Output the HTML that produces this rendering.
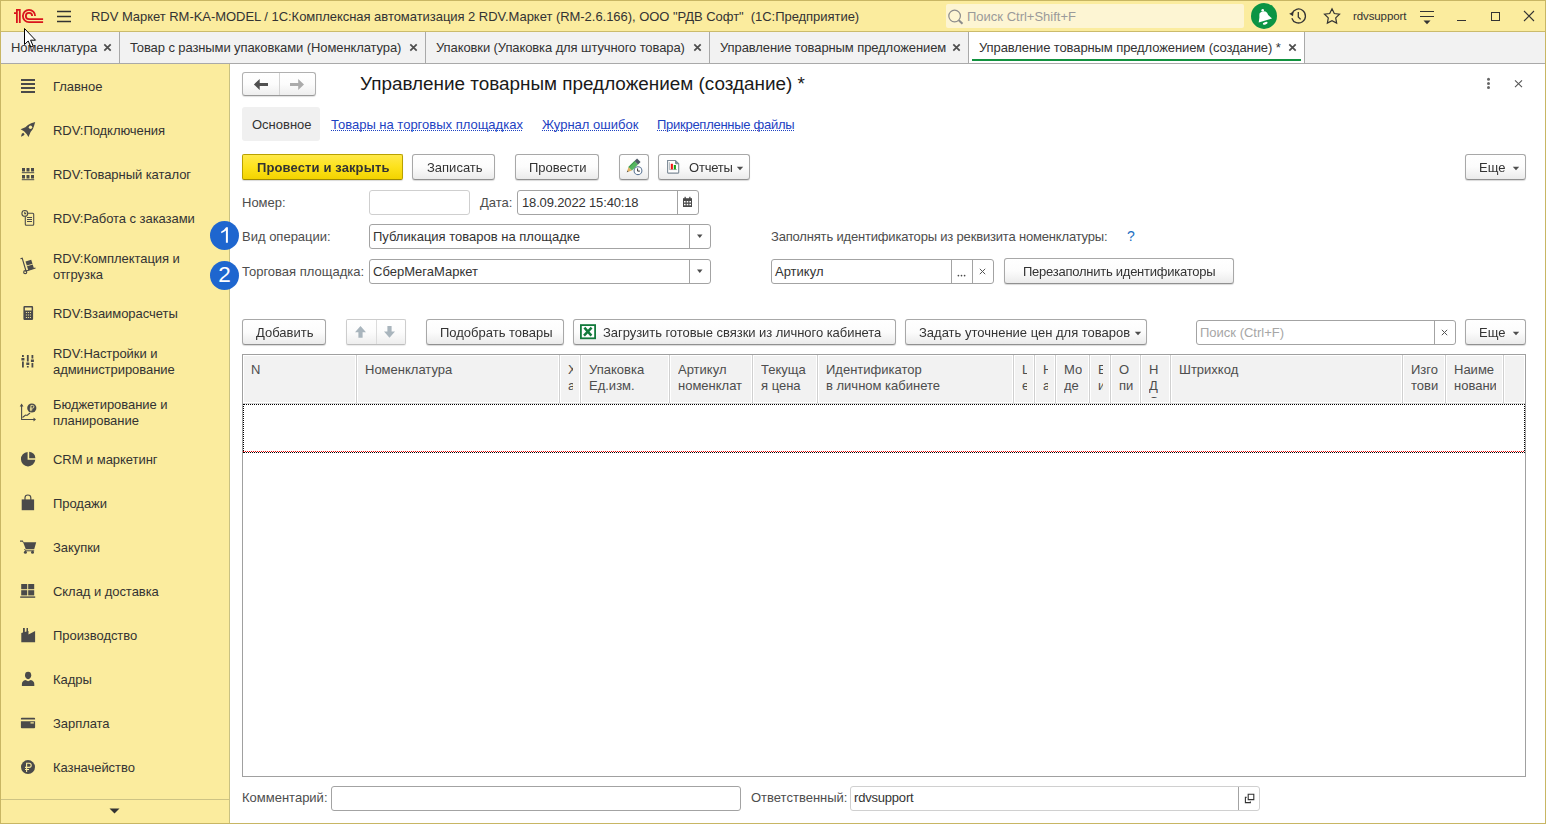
<!DOCTYPE html>
<html><head><meta charset="utf-8">
<style>
*{box-sizing:border-box;margin:0;padding:0}
html,body{width:1546px;height:824px;overflow:hidden;background:#fff;font-family:"Liberation Sans",sans-serif;font-size:13px;color:#333}
.a{position:absolute}
.t{position:absolute;font-size:13px;line-height:15px;white-space:nowrap}
.sep{position:absolute;top:32px;width:2px;height:31px;background:#a9a9a9}
.si{position:absolute;left:53px;font-size:13px;line-height:16px;color:#333;white-space:nowrap;letter-spacing:-0.05px}
.ic{position:absolute}
.btn{position:absolute;height:26px;border:1px solid #a8a8a8;border-bottom-color:#909090;border-radius:3px;background:linear-gradient(#ffffff 0%,#fcfcfc 50%,#ebebeb 100%);box-shadow:0 1px 1px rgba(0,0,0,.15)}
.inp{position:absolute;height:25px;border:1px solid #a3a3a3;border-radius:3px;background:#fff}
.lbl{color:#4d4d4d}
.hs{position:absolute;top:355px;width:2px;height:48px;border-left:1px solid #d0d0d0;border-right:1px solid #fbfbfb}
.hd{position:absolute;top:362px;font-size:13px;line-height:16px;color:#4d4d4d;white-space:nowrap;overflow:hidden}
.x7{position:absolute;width:8px;height:8px}
</style></head><body>
<!-- TITLE BAR -->
<div class="a" style="left:0;top:0;width:1546px;height:31px;background:#fbec9e"></div>
<div class="a" style="left:0;top:31px;width:1546px;height:1px;background:#cbbb6c"></div>
<!-- 1C logo -->
<svg class="a" style="left:0;top:0" width="50" height="31" viewBox="0 0 50 31">
 <g fill="#d9141c"><path d="M16 9 H20.7 V23 H18.9 V10.8 H17.8 V23 H16 V12.2 H14 V14 H16Z"/></g>
 <g fill="none" stroke="#d9141c" stroke-width="1.8">
  <path d="M43.1 22.1 H29 A6.1 6.1 0 1 1 35.1 16"/>
  <path d="M43.1 19.15 H29 A3.15 3.15 0 1 1 32.15 16"/>
 </g>
</svg>
<!-- hamburger -->
<svg class="a" style="left:55px;top:8px" width="18" height="16" viewBox="55 8 18 16"><g stroke="#333" stroke-width="1.5"><path d="M57 11.6 H71 M57 16.6 H71 M57 21.6 H71"/></g></svg>
<div class="t" style="left:91px;top:9px;color:#333;letter-spacing:-0.04px">RDV Маркет RM-KA-MODEL / 1С:Комплексная автоматизация 2 RDV.Маркет (RM-2.6.166), ООО "РДВ Софт"&nbsp; (1С:Предприятие)</div>
<!-- search -->
<div class="a" style="left:946px;top:4px;width:298px;height:24px;background:#fdf5d3;border-radius:2px"></div>
<svg class="a" style="left:946px;top:7px" width="20" height="20" viewBox="0 0 20 20"><circle cx="8.6" cy="9" r="5.8" fill="none" stroke="#8c8c8c" stroke-width="1.2"/><path d="M12.8 13.2 L16.5 16.8" stroke="#8c8c8c" stroke-width="2"/></svg>
<div class="t" style="left:967px;top:9px;color:#9a9a9a">Поиск Ctrl+Shift+F</div>
<!-- bell -->
<svg class="a" style="left:1250px;top:2px" width="28" height="28" viewBox="1250 2 28 28">
 <circle cx="1264" cy="15.9" r="13" fill="#0b9444"/>
 <circle cx="1262.7" cy="10.3" r="1.3" fill="#fff"/>
 <path d="M1259.6 13.2 Q1262.2 10.4 1265.5 11.6 Q1267.4 12.6 1268.2 15 L1272 18.4 L1258.7 22.4 L1259.4 17.4 Q1259.2 14.8 1259.6 13.2Z" fill="#fff"/>
 <ellipse cx="1265.2" cy="23.3" rx="2.5" ry="1.2" transform="rotate(-17 1265.2 23.3)" fill="#fff"/>
</svg>
<!-- history -->
<svg class="a" style="left:1288px;top:6px" width="20" height="20" viewBox="0 0 20 20">
 <path d="M3.9 7.5 A7 7 0 1 1 3.8 12.2" fill="none" stroke="#333" stroke-width="1.3"/>
 <path d="M1.2 7.8 L5.6 5.8 L5 10.2 Z" fill="#333"/>
 <path d="M10.3 6 V11 L12.6 13.4" fill="none" stroke="#333" stroke-width="1.3"/>
</svg>
<!-- star -->
<svg class="a" style="left:1320px;top:4px" width="24" height="24" viewBox="1320 4 24 24"><path d="M1332.00 8.80 L1334.29 13.54 L1339.51 14.26 L1335.71 17.91 L1336.64 23.09 L1332.00 20.60 L1327.36 23.09 L1328.29 17.91 L1324.49 14.26 L1329.71 13.54Z" fill="none" stroke="#333" stroke-width="1.2" stroke-linejoin="miter"/></svg>
<div class="t" style="left:1353px;top:9px;font-size:11.5px;color:#333;letter-spacing:-0.1px">rdvsupport</div>
<!-- filter icon -->
<div class="a" style="left:1420px;top:11px;width:14px;height:1.2px;background:#333"></div>
<div class="a" style="left:1420px;top:16px;width:14px;height:1.2px;background:#333"></div>
<svg class="a" style="left:1423px;top:20px" width="8" height="5" viewBox="0 0 8 5"><path d="M0.5 0.5 H7.5 L4 4.3Z" fill="#333"/></svg>
<!-- min / max / close -->
<div class="a" style="left:1457px;top:20px;width:9px;height:1.2px;background:#333"></div>
<div class="a" style="left:1491px;top:12px;width:9px;height:9px;border:1.2px solid #333"></div>
<svg class="a" style="left:1523px;top:10px" width="12" height="12" viewBox="0 0 12 12"><path d="M1 1 L11 11 M11 1 L1 11" stroke="#333" stroke-width="1.1"/></svg>

<!-- TABS -->
<div class="a" style="left:0;top:32px;width:1546px;height:31px;background:#f2f2f2"></div>
<div class="a" style="left:0;top:63px;width:1546px;height:1px;background:#a9a9a9"></div>
<div class="a" style="left:969px;top:32px;width:335px;height:31px;background:#fff"></div>
<div class="a" style="left:972px;top:59px;width:329px;height:2px;background:#12923f"></div>
<div class="sep" style="left:119px;width:1px"></div>
<div class="sep" style="left:425px;width:1px"></div>
<div class="sep" style="left:709px;width:1px"></div>
<div class="sep" style="left:968px;width:1px"></div>
<div class="sep" style="left:1304px;width:1px"></div>
<div class="t" style="left:11px;top:40px;color:#333;letter-spacing:-0.1px">Номенклатура</div>
<div class="t" style="left:130px;top:40px;color:#333;letter-spacing:-0.1px">Товар с разными упаковками (Номенклатура)</div>
<div class="t" style="left:436px;top:40px;color:#333;letter-spacing:-0.1px">Упаковки (Упаковка для штучного товара)</div>
<div class="t" style="left:720px;top:40px;color:#333;letter-spacing:-0.1px">Управление товарным предложением</div>
<div class="t" style="left:979px;top:40px;color:#333;letter-spacing:-0.1px">Управление товарным предложением (создание) *</div>
<!-- tab close x -->
<svg class="a" style="left:0;top:0" width="1546" height="64" viewBox="0 0 1546 64"><g stroke="#4d4d4d" stroke-width="1.7" fill="none">
 <path d="M104.3 44.3 L110.7 50.7 M110.7 44.3 L104.3 50.7"/>
 <path d="M410.3 44.3 L416.7 50.7 M416.7 44.3 L410.3 50.7"/>
 <path d="M694.3 44.3 L700.7 50.7 M700.7 44.3 L694.3 50.7"/>
 <path d="M953.3 44.3 L959.7 50.7 M959.7 44.3 L953.3 50.7"/>
 <path d="M1289.3 44.3 L1295.7 50.7 M1295.7 44.3 L1289.3 50.7"/>
</g></svg>

<!-- SIDEBAR -->
<div class="a" style="left:0;top:64px;width:229px;height:760px;background:#fbec9e"></div>
<div class="a" style="left:229px;top:64px;width:1px;height:760px;background:#c9c182"></div>
<div class="a" style="left:0;top:799px;width:229px;height:1px;background:#cdc384"></div>
<svg class="a" style="left:109px;top:808px" width="11" height="6" viewBox="0 0 11 6"><path d="M0.5 0.5 H10.5 L5.5 5.5Z" fill="#333"/></svg>
<div class="si" style="top:79px">Главное</div>
<div class="si" style="top:123px">RDV:Подключения</div>
<div class="si" style="top:167px">RDV:Товарный каталог</div>
<div class="si" style="top:211px">RDV:Работа с заказами</div>
<div class="si" style="top:251px">RDV:Комплектация и<br>отгрузка</div>
<div class="si" style="top:306px">RDV:Взаиморасчеты</div>
<div class="si" style="top:346px">RDV:Настройки и<br>администрирование</div>
<div class="si" style="top:397px">Бюджетирование и<br>планирование</div>
<div class="si" style="top:452px">CRM и маркетинг</div>
<div class="si" style="top:496px">Продажи</div>
<div class="si" style="top:540px">Закупки</div>
<div class="si" style="top:584px">Склад и доставка</div>
<div class="si" style="top:628px">Производство</div>
<div class="si" style="top:672px">Кадры</div>
<div class="si" style="top:716px">Зарплата</div>
<div class="si" style="top:760px">Казначейство</div>
<svg class="a" style="left:0;top:64px" width="229" height="736" viewBox="0 64 229 736"><g fill="#4a4a4a">
 <!-- Главное -->
 <rect x="21" y="79" width="14" height="2"/><rect x="21" y="83" width="14" height="2"/><rect x="21" y="87" width="14" height="2"/><rect x="21" y="91" width="14" height="2"/>
 <!-- rocket -->
 <path d="M35.2 122 L31.2 123.2 Q27.6 124.6 25.4 127.2 L20.6 129.3 L24 131.2 L26.6 134 L28.5 136.9 L30.6 132 Q33.4 129.4 34.1 125.8 Z"/>
 <circle cx="30.5" cy="127.3" r="1.7" fill="#fbec9e"/>
 <path d="M21 136.8 L21.8 133.8 L23.2 132.8 L24.6 134.2 L23.6 135.6 Z"/>
 <!-- catalog -->
 <rect x="22" y="168" width="3" height="3.5"/><rect x="26.5" y="168" width="3" height="3.5"/><rect x="31" y="168" width="3" height="3.5"/>
 <rect x="21.8" y="172.2" width="12.4" height="1"/>
 <rect x="22" y="175" width="3" height="3.5"/><rect x="26.5" y="175" width="3" height="3.5"/><rect x="31" y="175" width="3" height="3.5"/>
 <rect x="21.8" y="179.2" width="12.4" height="1"/>
 <!-- orders -->
 <g fill="none" stroke="#4a4a4a" stroke-width="1.1"><rect x="25.3" y="213.3" width="8.4" height="12" rx="1"/><circle cx="24.8" cy="213.4" r="2.9" fill="#fbec9e"/><path d="M24.8 211.8 V213.6 H26.2"/><path d="M27 217.5 H32 M27 219.5 H32 M27 221.5 H32" stroke-width="1"/></g>
 <!-- hand truck -->
 <g fill="none" stroke="#4a4a4a" stroke-width="1.2"><path d="M20.5 258.8 L22.2 258.2 L26 271 L35.5 268"/><circle cx="25.2" cy="272.2" r="1.5"/></g>
 <path d="M25.5 261.5 L31.2 259.7 L32.5 263.8 L26.8 265.6Z M27 266.3 L32.7 264.5 L34 268.6 L28.3 270.4Z"/>
 <!-- calculator -->
 <path d="M24.5 306 H32 Q33.1 306 33.1 307.2 V318.8 Q33.1 320 32 320 H24.5 Q23.4 320 23.4 318.8 V307.2 Q23.4 306 24.5 306Z M24.9 307.5 V310.5 H31.6 V307.5Z" fill-rule="evenodd"/>
 <g fill="#fbec9e"><rect x="25.9" y="312" width="1" height="1"/><rect x="27.9" y="312" width="1" height="1"/><rect x="29.9" y="312" width="1" height="1"/><rect x="25.9" y="314.5" width="1" height="1"/><rect x="27.9" y="314.5" width="1" height="1"/><rect x="29.9" y="314.5" width="1" height="1"/><rect x="25.9" y="317" width="1" height="1"/><rect x="27.9" y="317" width="1" height="1"/><rect x="29.9" y="317" width="1" height="1"/></g>
 <!-- sliders -->
 <rect x="22" y="355" width="1.8" height="2"/><rect x="21.4" y="358" width="3" height="2.5"/><rect x="22" y="361.5" width="1.8" height="6"/>
 <rect x="26.9" y="355" width="1.8" height="6.5"/><rect x="26.3" y="362.5" width="3" height="2.5"/><rect x="26.9" y="366" width="1.8" height="1.5"/>
 <rect x="31.5" y="355" width="1.8" height="3.5"/><rect x="30.9" y="359.5" width="3" height="2.5"/><rect x="31.5" y="363" width="1.8" height="4.5"/>
 <!-- budget -->
 <g fill="none" stroke="#4a4a4a" stroke-width="1.1"><path d="M21.6 405 V419.5 H35"/><path d="M22.5 417.5 L25.5 415 L27 415.5 L30 413"/></g>
 <path d="M19.7 406.5 L21.6 403.5 L23.5 406.5Z M33.5 417.6 L36 419.5 L33.5 421.4Z"/>
 <circle cx="31.8" cy="408" r="4.6"/>
 <g fill="none" stroke="#fbec9e" stroke-width="0.9"><path d="M30.9 411.2 V405.4 H32.5 Q33.9 405.4 33.9 406.8 Q33.9 408.2 32.5 408.2 H29.8 M29.8 409.8 H32.4"/></g>
 <!-- CRM pie -->
 <path d="M27.6 452 A7.2 7.2 0 1 0 35.3 459.8 H27.6Z"/>
 <path d="M29.2 451.8 A7 7 0 0 1 35.4 458.2 H29.2Z"/>
 <!-- bag -->
 <rect x="21.7" y="499.4" width="12.4" height="10.8"/>
 <path d="M25 500 V497.8 Q25 495 27.9 495 Q30.8 495 30.8 497.8 V500" fill="none" stroke="#4a4a4a" stroke-width="1.2"/>
 <!-- cart -->
 <path d="M20 540.5 H22.8 L23.6 542.3 H36.2 L34.2 549.3 H25.8 L23.3 542.8 L22.2 541.7 H20Z"/>
 <circle cx="25.4" cy="552.2" r="1.5"/><circle cx="32.5" cy="552.2" r="1.5"/>
 <path d="M24.6 549 L25.5 550.8 H34.2" fill="none" stroke="#4a4a4a" stroke-width="1"/>
 <!-- sklad -->
 <rect x="21.2" y="584" width="6" height="5.2"/><rect x="28.2" y="584" width="6" height="5.2"/>
 <rect x="21.2" y="590.2" width="6" height="5.2"/><rect x="28.2" y="590.2" width="6" height="5.2"/>
 <rect x="20.2" y="596.4" width="15" height="1.4"/>
 <!-- factory -->
 <path d="M21.3 642.2 V633 L23 632.5 V628 H24.8 V632 L26.5 631.5 V628 H28 V631 L28.5 630.9 V634.5 L35.1 631 V642.2Z"/>
 <!-- person -->
 <path d="M28.1 671.8 Q31.2 671.8 31.2 675.2 Q31.2 678.3 28.1 679.3 Q25 678.3 25 675.2 Q25 671.8 28.1 671.8Z"/>
 <path d="M21.9 686 V684 Q22 680.8 25.5 680 L28.1 681.3 L30.7 680 Q34.2 680.8 34.3 684 V686Z"/>
 <!-- card -->
 <path d="M21.8 717.8 H34.2 Q35.1 717.8 35.1 718.8 V719.5 H20.9 V718.8 Q20.9 717.8 21.8 717.8Z"/>
 <path d="M20.9 721.2 H35.1 V727.3 Q35.1 728.3 34.2 728.3 H21.8 Q20.9 728.3 20.9 727.3Z M30.5 722.3 V723.4 H33.8 V722.3Z" fill-rule="evenodd"/>
 <!-- ruble -->
 <circle cx="28" cy="767.1" r="7"/>
 <g fill="none" stroke="#fbec9e" stroke-width="1.1"><path d="M26.6 772 V763.2 H29.1 Q31.2 763.2 31.2 765.3 Q31.2 767.4 29.1 767.4 H25 M25 769.5 H29"/></g>
</g></svg>

<!-- CONTENT HEADER -->
<div class="a" style="left:242px;top:72px;width:74px;height:24px;border:1px solid #b0b0b0;border-bottom-color:#999;border-radius:3px;background:linear-gradient(#fff 0%,#fcfcfc 50%,#eeeeee 100%);box-shadow:0 1px 1px rgba(0,0,0,.12)"></div>
<div class="a" style="left:279px;top:73px;width:1px;height:22px;background:#d4d4d4"></div>
<svg class="a" style="left:250px;top:76px" width="20" height="16" viewBox="250 76 20 16"><path d="M253.9 84.4 L259.7 78.9 V83.1 H268 V85.9 H259.7 V89.9Z" fill="#505050"/></svg>
<svg class="a" style="left:288px;top:76px" width="20" height="16" viewBox="288 76 20 16"><path d="M304 84.4 L298.2 78.9 V83.1 H290 V85.9 H298.2 V89.9Z" fill="#ababab"/></svg>
<div class="t" style="left:360px;top:74px;font-size:18.9px;line-height:20px;color:#1a1a1a">Управление товарным предложением (создание) *</div>
<svg class="a" style="left:1484px;top:76px" width="9" height="15" viewBox="0 0 9 15"><g fill="#666"><circle cx="4.5" cy="3.3" r="1.5"/><circle cx="4.5" cy="7.4" r="1.5"/><circle cx="4.5" cy="11.4" r="1.5"/></g></svg>
<svg class="a" style="left:1512px;top:77px" width="13" height="13" viewBox="0 0 13 13"><path d="M3 3.4 L10 10.2 M10 3.4 L3 10.2" stroke="#555" stroke-width="1.1"/></svg>

<!-- form tabs -->
<div class="a" style="left:242px;top:107px;width:78px;height:34px;background:#f0f0f0;border-radius:3px"></div>
<div class="t" style="left:252px;top:117px;color:#333">Основное</div>
<div class="t" style="left:331px;top:117px;color:#1d42c2">Товары на торговых площадках</div>
<div class="t" style="left:542px;top:117px;color:#1d42c2">Журнал ошибок</div>
<div class="t" style="left:657px;top:117px;color:#1d42c2;letter-spacing:-0.27px">Прикрепленные файлы</div>
<div class="a" style="left:331px;top:130px;width:191px;height:1px;background:repeating-linear-gradient(90deg,#1d42c2 0 1px,transparent 1px 2px)"></div>
<div class="a" style="left:542px;top:130px;width:95px;height:1px;background:repeating-linear-gradient(90deg,#1d42c2 0 1px,transparent 1px 2px)"></div>
<div class="a" style="left:657px;top:130px;width:137px;height:1px;background:repeating-linear-gradient(90deg,#1d42c2 0 1px,transparent 1px 2px)"></div>

<!-- command bar -->
<div class="a" style="left:242px;top:154px;width:161px;height:26px;border:1px solid #b9a100;border-bottom-color:#a08a00;border-radius:2px;background:linear-gradient(#ffe94a 0%,#fde21c 50%,#f3d300 100%);box-shadow:0 1px 1px rgba(0,0,0,.15)"></div>
<div class="t" style="will-change:transform;left:257px;top:160px;font-weight:bold;color:#333;letter-spacing:0.12px">Провести и закрыть</div>
<div class="btn" style="left:412px;top:154px;width:83px"></div>
<div class="t" style="will-change:transform;left:427px;top:160px">Записать</div>
<div class="btn" style="left:515px;top:154px;width:84px"></div>
<div class="t" style="will-change:transform;left:529px;top:160px">Провести</div>
<div class="btn" style="left:619px;top:154px;width:30px"></div>
<svg class="a" style="left:624px;top:157px" width="20" height="20" viewBox="624 157 20 20">
 <g transform="translate(626.8 172.2) rotate(-45)">
  <path d="M0 0 L4.8 -2.4 V2.4Z" fill="#e0b060"/>
  <path d="M0 0 L1.6 -0.8 V0.8Z" fill="#555"/>
  <rect x="4.8" y="-2.5" width="8.6" height="5" fill="#55b560"/>
  <rect x="4.8" y="-2.5" width="8.6" height="1" fill="#3e9a4a"/>
  <rect x="13.4" y="-2.5" width="3.6" height="5" fill="#4d5a66"/>
 </g>
 <circle cx="638" cy="170.7" r="3.9" fill="#fff" stroke="#5f7896" stroke-width="1.1"/>
 <path d="M637.6 168.4 V171.1 H639.9" fill="none" stroke="#333" stroke-width="1"/>
</svg>
<div class="btn" style="left:658px;top:154px;width:92px"></div>
<svg class="a" style="left:666px;top:159px" width="15" height="16" viewBox="666 159 15 16">
 <path d="M667.6 160.5 H675.4 L678.7 163.8 V172.5 Q678.7 173.1 678.1 173.1 H668.2 Q667.6 173.1 667.6 172.5Z" fill="#fff" stroke="#7d8a96" stroke-width="1.1"/>
 <path d="M675 160.3 V163 Q675 164.2 676.2 164.2 H678.9Z" fill="#7d8a96"/>
 <path d="M669.4 162.2 V169.6 H677" fill="none" stroke="#9aa9b0" stroke-width="0.8"/>
 <rect x="670.8" y="163.8" width="2.1" height="5.6" fill="#f01818"/>
 <rect x="673.8" y="165" width="2.1" height="4.4" fill="#14a014"/>
</svg>
<div class="t" style="will-change:transform;left:689px;top:160px;letter-spacing:-0.2px">Отчеты</div>
<svg class="a" style="left:736px;top:166px" width="8" height="5" viewBox="0 0 8 5"><path d="M0.8 0.8 H7.2 L4 4.2Z" fill="#4d4d4d"/></svg>
<div class="btn" style="left:1465px;top:154px;width:61px"></div>
<div class="t" style="will-change:transform;left:1479px;top:160px">Еще</div>
<svg class="a" style="left:1512px;top:166px" width="8" height="5" viewBox="0 0 8 5"><path d="M0.8 0.8 H7.2 L4 4.2Z" fill="#4d4d4d"/></svg>

<!-- Fields -->
<div class="t lbl" style="left:242px;top:195px">Номер:</div>
<div class="inp" style="left:369px;top:190px;width:101px;border-color:#cfcfcf"></div>
<div class="t lbl" style="left:480px;top:195px">Дата:</div>
<div class="inp" style="left:517px;top:190px;width:182px"></div>
<div class="a" style="left:677px;top:191px;width:1px;height:23px;background:#a3a3a3"></div>
<div class="t" style="left:522px;top:195px;letter-spacing:-0.15px">18.09.2022 15:40:18</div>
<svg class="a" style="left:682px;top:196px" width="11" height="12" viewBox="682 196 11 12"><path d="M683 198.2 H692 V207 H683Z" fill="#4a4a4a"/><rect x="684.5" y="196.8" width="1.3" height="2.4" fill="#4a4a4a"/><rect x="689.2" y="196.8" width="1.3" height="2.4" fill="#4a4a4a"/><g fill="#fff"><rect x="684" y="201" width="1.6" height="1.5"/><rect x="686.7" y="201" width="1.6" height="1.5"/><rect x="689.4" y="201" width="1.6" height="1.5"/><rect x="684" y="203.8" width="1.6" height="1.5"/><rect x="686.7" y="203.8" width="1.6" height="1.5"/><rect x="689.4" y="203.8" width="1.6" height="1.5"/></g></svg>

<div class="t lbl" style="left:242px;top:229px">Вид операции:</div>
<div class="inp" style="left:369px;top:224px;width:342px"></div>
<div class="a" style="left:689px;top:225px;width:1px;height:23px;background:#a3a3a3"></div>
<div class="t" style="left:373px;top:229px">Публикация товаров на площадке</div>
<svg class="a" style="left:696px;top:234px" width="8" height="5" viewBox="0 0 8 5"><path d="M1 0.5 H6.5 L3.75 4Z" fill="#4d4d4d"/></svg>
<div class="t lbl" style="left:242px;top:264px">Торговая площадка:</div>
<div class="inp" style="left:369px;top:259px;width:342px"></div>
<div class="a" style="left:689px;top:260px;width:1px;height:23px;background:#a3a3a3"></div>
<div class="t" style="left:373px;top:264px">СберМегаМаркет</div>
<svg class="a" style="left:696px;top:269px" width="8" height="5" viewBox="0 0 8 5"><path d="M1 0.5 H6.5 L3.75 4Z" fill="#4d4d4d"/></svg>

<div class="t lbl" style="left:771px;top:229px;letter-spacing:-0.18px">Заполнять идентификаторы из реквизита номенклатуры:</div>
<div class="t" style="left:1127px;top:229px;font-size:14px;color:#1d6fc2">?</div>
<div class="inp" style="left:771px;top:259px;width:223px"></div>
<div class="a" style="left:951px;top:260px;width:1px;height:23px;background:#a3a3a3"></div>
<div class="a" style="left:972px;top:260px;width:1px;height:23px;background:#a3a3a3"></div>
<div class="t" style="left:775px;top:264px">Артикул</div>
<svg class="a" style="left:955px;top:272px" width="12" height="6" viewBox="955 272 12 6"><g fill="#4a4a4a"><circle cx="958.4" cy="275.6" r="0.85"/><circle cx="961.5" cy="275.6" r="0.85"/><circle cx="964.6" cy="275.6" r="0.85"/></g></svg>
<svg class="a" style="left:978px;top:267px" width="9" height="9" viewBox="0 0 9 9"><path d="M1.8 1.8 L7.2 7.2 M7.2 1.8 L1.8 7.2" stroke="#555" stroke-width="1"/></svg>
<div class="btn" style="left:1004px;top:258px;width:230px"></div>
<div class="t" style="will-change:transform;left:1023px;top:264px;letter-spacing:-0.25px">Перезаполнить идентификаторы</div>

<!-- numbered circles -->
<div class="a" style="left:209.7px;top:220.8px;width:29px;height:29px;border-radius:50%;background:#1e66cf"></div>
<div class="a" style="left:209.7px;top:260.8px;width:29px;height:29px;border-radius:50%;background:#1e66cf"></div>
<svg class="a" style="left:210px;top:221px" width="29" height="29" viewBox="210 221 29 29"><path d="M226.1 227.3 H227.9 V242.8 H225.9 V230.6 Q224.2 232.2 221.2 233.3 V231.4 Q224.6 229.9 226.1 227.3Z" fill="#fff"/></svg>
<div class="t" style="left:212px;top:263px;width:25px;text-align:center;font-size:22.5px;line-height:24px;color:#fff">2</div>

<!-- TABLE TOOLBAR -->
<div class="btn" style="left:242px;top:319px;width:84px"></div>
<div class="t" style="will-change:transform;left:256px;top:325px">Добавить</div>
<div class="a" style="left:346px;top:319px;width:60px;height:26px;border:1px solid #cdcdcd;border-bottom-color:#bdbdbd;border-radius:2px;background:linear-gradient(#fff 0%,#fcfcfc 50%,#eeeeee 100%);box-shadow:0 1px 1px rgba(0,0,0,.08)"></div>
<div class="a" style="left:376px;top:320px;width:1px;height:24px;background:#dcdcdc"></div>
<svg class="a" style="left:354px;top:325px" width="13" height="14" viewBox="0 0 13 14"><path d="M6.5 1 L12 7.3 H8.6 V12.8 H4.4 V7.3 H1Z" fill="#a9b5bd"/></svg>
<svg class="a" style="left:383px;top:325px" width="13" height="14" viewBox="0 0 13 14"><path d="M6.5 12.8 L12 6.6 H8.6 V1 H4.4 V6.6 H1Z" fill="#a9b5bd"/></svg>
<div class="btn" style="left:426px;top:319px;width:138px"></div>
<div class="t" style="will-change:transform;left:440px;top:325px">Подобрать товары</div>
<div class="btn" style="left:573px;top:319px;width:323px"></div>
<svg class="a" style="left:578px;top:322px" width="20" height="19" viewBox="578 322 20 19"><rect x="580.9" y="325.1" width="14.2" height="13.2" fill="#fff" stroke="#137a3c" stroke-width="1.8"/><path d="M584.4 327.6 L591.4 335.6 M591.6 327.6 L584 335.6" stroke="#137a3c" stroke-width="2.5"/></svg>
<div class="t" style="will-change:transform;left:603px;top:325px;letter-spacing:-0.05px">Загрузить готовые связки из личного кабинета</div>
<div class="btn" style="left:905px;top:319px;width:242px"></div>
<div class="t" style="will-change:transform;left:919px;top:325px">Задать уточнение цен для товаров</div>
<svg class="a" style="left:1134px;top:331px" width="8" height="5" viewBox="0 0 8 5"><path d="M0.8 0.8 H7.2 L4 4.2Z" fill="#4d4d4d"/></svg>
<div class="inp" style="left:1196px;top:320px;width:260px;height:25px"></div>
<div class="a" style="left:1434px;top:321px;width:1px;height:23px;background:#a3a3a3"></div>
<div class="t" style="left:1200px;top:325px;color:#a6a6a6">Поиск (Ctrl+F)</div>
<svg class="a" style="left:1440px;top:328px" width="9" height="9" viewBox="0 0 9 9"><path d="M1.8 1.8 L7.2 7.2 M7.2 1.8 L1.8 7.2" stroke="#555" stroke-width="1"/></svg>
<div class="btn" style="left:1465px;top:319px;width:61px"></div>
<div class="t" style="will-change:transform;left:1479px;top:325px">Еще</div>
<svg class="a" style="left:1512px;top:331px" width="8" height="5" viewBox="0 0 8 5"><path d="M0.8 0.8 H7.2 L4 4.2Z" fill="#4d4d4d"/></svg>

<!-- TABLE -->
<div class="a" style="left:242px;top:354px;width:1284px;height:423px;border:1px solid #a0a0a0;background:#fff"></div>
<div class="a" style="left:243px;top:403px;width:1282px;height:1px;background:#d6d6d6"></div>
<div class="a" style="left:244px;top:356px;width:111px;height:46px;background:#f2f2f2"></div>
<div class="hd" style="left:251px;width:98px;height:36px">N</div>
<div class="a" style="left:358px;top:356px;width:200px;height:46px;background:#f2f2f2"></div>
<div class="a" style="left:356px;top:355px;width:1px;height:48px;background:#d0d0d0"></div>
<div class="hd" style="left:365px;width:187px;height:36px">Номенклатура</div>
<div class="a" style="left:561px;top:356px;width:18px;height:46px;background:#f2f2f2"></div>
<div class="a" style="left:559px;top:355px;width:1px;height:48px;background:#d0d0d0"></div>
<div class="hd" style="left:568px;width:5px;height:36px">Ха<br>ар</div>
<div class="a" style="left:582px;top:356px;width:86px;height:46px;background:#f2f2f2"></div>
<div class="a" style="left:580px;top:355px;width:1px;height:48px;background:#d0d0d0"></div>
<div class="hd" style="left:589px;width:73px;height:36px">Упаковка<br>Ед.изм.</div>
<div class="a" style="left:671px;top:356px;width:80px;height:46px;background:#f2f2f2"></div>
<div class="a" style="left:669px;top:355px;width:1px;height:48px;background:#d0d0d0"></div>
<div class="hd" style="left:678px;width:67px;height:36px">Артикул<br>номенклат</div>
<div class="a" style="left:754px;top:356px;width:62px;height:46px;background:#f2f2f2"></div>
<div class="a" style="left:752px;top:355px;width:1px;height:48px;background:#d0d0d0"></div>
<div class="hd" style="left:761px;width:49px;height:36px">Текуща<br>я цена</div>
<div class="a" style="left:819px;top:356px;width:193px;height:46px;background:#f2f2f2"></div>
<div class="a" style="left:817px;top:355px;width:1px;height:48px;background:#d0d0d0"></div>
<div class="hd" style="left:826px;width:180px;height:36px">Идентификатор<br>в личном кабинете</div>
<div class="a" style="left:1015px;top:356px;width:18px;height:46px;background:#f2f2f2"></div>
<div class="a" style="left:1013px;top:355px;width:1px;height:48px;background:#d0d0d0"></div>
<div class="hd" style="left:1022px;width:5px;height:36px">Ц<br>е</div>
<div class="a" style="left:1036px;top:356px;width:18px;height:46px;background:#f2f2f2"></div>
<div class="a" style="left:1034px;top:355px;width:1px;height:48px;background:#d0d0d0"></div>
<div class="hd" style="left:1043px;width:5px;height:36px">Н<br>а</div>
<div class="a" style="left:1057px;top:356px;width:31px;height:46px;background:#f2f2f2"></div>
<div class="a" style="left:1055px;top:355px;width:1px;height:48px;background:#d0d0d0"></div>
<div class="hd" style="left:1064px;width:18px;height:36px">Мо<br>де</div>
<div class="a" style="left:1091px;top:356px;width:18px;height:46px;background:#f2f2f2"></div>
<div class="a" style="left:1089px;top:355px;width:1px;height:48px;background:#d0d0d0"></div>
<div class="hd" style="left:1098px;width:5px;height:36px">Е<br>и</div>
<div class="a" style="left:1112px;top:356px;width:27px;height:46px;background:#f2f2f2"></div>
<div class="a" style="left:1110px;top:355px;width:1px;height:48px;background:#d0d0d0"></div>
<div class="hd" style="left:1119px;width:14px;height:36px">О<br>пи</div>
<div class="a" style="left:1142px;top:356px;width:27px;height:46px;background:#f2f2f2"></div>
<div class="a" style="left:1140px;top:355px;width:1px;height:48px;background:#d0d0d0"></div>
<div class="hd" style="left:1149px;width:14px;height:36px">Н<br>Д<br>С</div>
<div class="a" style="left:1172px;top:356px;width:229px;height:46px;background:#f2f2f2"></div>
<div class="a" style="left:1170px;top:355px;width:1px;height:48px;background:#d0d0d0"></div>
<div class="hd" style="left:1179px;width:216px;height:36px">Штрихкод</div>
<div class="a" style="left:1404px;top:356px;width:40px;height:46px;background:#f2f2f2"></div>
<div class="a" style="left:1402px;top:355px;width:1px;height:48px;background:#d0d0d0"></div>
<div class="hd" style="left:1411px;width:27px;height:36px">Изго<br>тови</div>
<div class="a" style="left:1447px;top:356px;width:55px;height:46px;background:#f2f2f2"></div>
<div class="a" style="left:1445px;top:355px;width:1px;height:48px;background:#d0d0d0"></div>
<div class="hd" style="left:1454px;width:42px;height:36px">Наиме<br>новани</div>
<div class="a" style="left:1505px;top:356px;width:19px;height:46px;background:#f2f2f2"></div>
<div class="a" style="left:1503px;top:355px;width:1px;height:48px;background:#d0d0d0"></div>
<!-- focus row -->
<div class="a" style="left:243px;top:404px;width:1282px;height:49px;border:1px dotted #000;border-bottom:none"></div>
<div class="a" style="left:243px;top:451px;width:1282px;height:1px;background:repeating-linear-gradient(90deg,#e00 0 1px,transparent 1px 2px)"></div>
<div class="a" style="left:243px;top:452px;width:1282px;height:1px;background:repeating-linear-gradient(90deg,transparent 0 1px,#000 1px 2px)"></div>

<!-- FOOTER -->
<div class="t lbl" style="left:242px;top:790px">Комментарий:</div>
<div class="inp" style="left:331px;top:786px;width:410px"></div>
<div class="t lbl" style="left:751px;top:790px">Ответственный:</div>
<div class="inp" style="left:850px;top:786px;width:410px;border-color:#d0d0d0"></div>
<div class="a" style="left:1238px;top:787px;width:1px;height:23px;background:#a3a3a3"></div>
<div class="t" style="left:854px;top:790px;letter-spacing:-0.2px">rdvsupport</div>
<svg class="a" style="left:1244px;top:793px" width="11" height="11" viewBox="0 0 11 11"><path d="M4.2 1.2 H9.8 V6.6 H4.2Z" fill="none" stroke="#333" stroke-width="1.1"/><path d="M2.6 4.4 H1.4 V9.6 H6.4 V8.4" fill="none" stroke="#333" stroke-width="1.1"/></svg>

<!-- WINDOW BORDER -->
<div class="a" style="left:0;top:0;width:1546px;height:824px;border:1px solid #c8b664"></div>
<!-- cursor -->
<svg class="a" style="left:24px;top:28px" width="14" height="21" viewBox="0 0 14 21"><path d="M0.5 0.5 V16.5 L4.2 13 L6.8 19 L9.2 18 L6.6 12.2 H11.5Z" fill="#fff" stroke="#000" stroke-width="1" stroke-linejoin="miter"/></svg>
</body></html>
